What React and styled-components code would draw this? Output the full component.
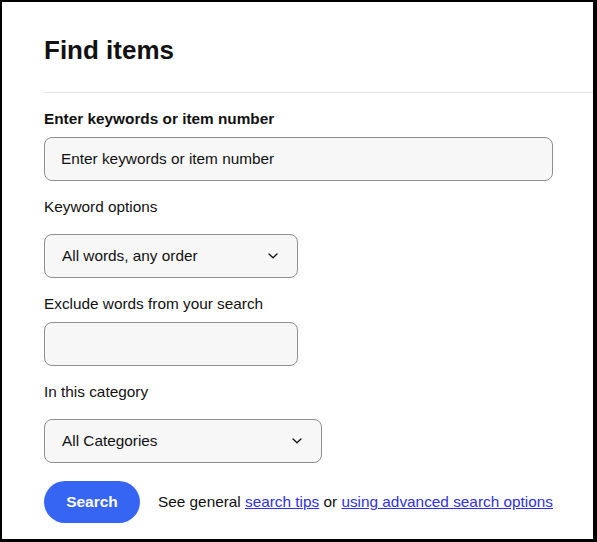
import React from "react";
import styled, { createGlobalStyle } from "styled-components";

const GlobalStyle = createGlobalStyle`
  html, body { margin: 0; padding: 0; background: #fff; }
  body { font-family: "Liberation Sans", Arial, Helvetica, sans-serif; color: #111; }
  * { box-sizing: border-box; }
`;

const Frame = styled.div`
  width: 597px;
  height: 542px;
  border-style: solid;
  border-color: #000;
  border-width: 2px 4px 3px 2px;
  padding: 33px 0 0 42px;
  background: #fff;
  overflow: hidden;
`;

const Title = styled.h1`
  margin: 0;
  font-size: 26px;
  line-height: 30px;
  font-weight: 700;
  color: #111;
`;

const Rule = styled.hr`
  margin: 27px 0 0 0;
  border: 0;
  height: 1px;
  background: #e6e6e6;
`;

const Field = styled.div`
  display: flex;
  flex-direction: column;
  align-items: flex-start;
  margin-top: 16px;
`;

const Label = styled.label`
  font-size: 15.35px;
  line-height: 20px;
  font-weight: ${(p) => (p.$bold ? 700 : 400)};
  color: #111;
`;

const TextInput = styled.input`
  margin-top: 8px;
  width: ${(p) => p.$width}px;
  height: 44px;
  border: 1px solid #8f8f8f;
  border-radius: 8px;
  background: #f7f7f7;
  padding: 0 16px;
  font-family: inherit;
  font-size: 15.35px;
  color: #111;
  outline: none;
  &::placeholder { color: #111; opacity: 1; }
`;

const SelectBox = styled.div`
  margin-top: 17px;
  width: ${(p) => p.$width}px;
  height: 44px;
  border: 1px solid #8f8f8f;
  border-radius: 8px;
  background: #f7f7f7;
  padding: 0 19px 0 17px;
  display: flex;
  align-items: center;
  justify-content: space-between;
  font-size: 15.35px;
  color: #111;
  cursor: pointer;
`;

const Actions = styled.div`
  display: flex;
  align-items: center;
  gap: 18px;
  margin-top: 18px;
`;

const SearchButton = styled.button`
  height: 42px;
  width: 96px;
  padding: 0;
  border: 0;
  border-radius: 21px;
  background: #3665f3;
  color: #fff;
  font-family: inherit;
  font-size: 15.5px;
  font-weight: 700;
  cursor: pointer;
`;

const Helper = styled.p`
  margin: 0;
  font-size: 15.35px;
  line-height: 20px;
  color: #111;
`;

const Link = styled.a`
  color: #3030e0;
  text-decoration: underline;
`;

const Chevron = () => (
  <svg width="10" height="6" viewBox="0 0 10 6" fill="none">
    <path d="M1 1L5 4.8L9 1" stroke="#111" strokeWidth="1.3" strokeLinecap="round" strokeLinejoin="round" />
  </svg>
);

const Select = ({ width, value }) => (
  <SelectBox $width={width} role="combobox">
    <span>{value}</span>
    <Chevron />
  </SelectBox>
);

export default function App() {
  return (
    <>
      <GlobalStyle />
      <Frame>
        <Title>Find items</Title>
        <Rule />
        <Field>
          <Label $bold>Enter keywords or item number</Label>
          <TextInput $width={509} placeholder="Enter keywords or item number" />
        </Field>
        <Field>
          <Label>Keyword options</Label>
          <Select width={254} value="All words, any order" />
        </Field>
        <Field>
          <Label>Exclude words from your search</Label>
          <TextInput $width={254} />
        </Field>
        <Field>
          <Label>In this category</Label>
          <Select width={278} value="All Categories" />
        </Field>
        <Actions>
          <SearchButton>Search</SearchButton>
          <Helper>
            See general <Link href="#">search tips</Link> or{" "}
            <Link href="#">using advanced search options</Link>
          </Helper>
        </Actions>
      </Frame>
    </>
  );
}
